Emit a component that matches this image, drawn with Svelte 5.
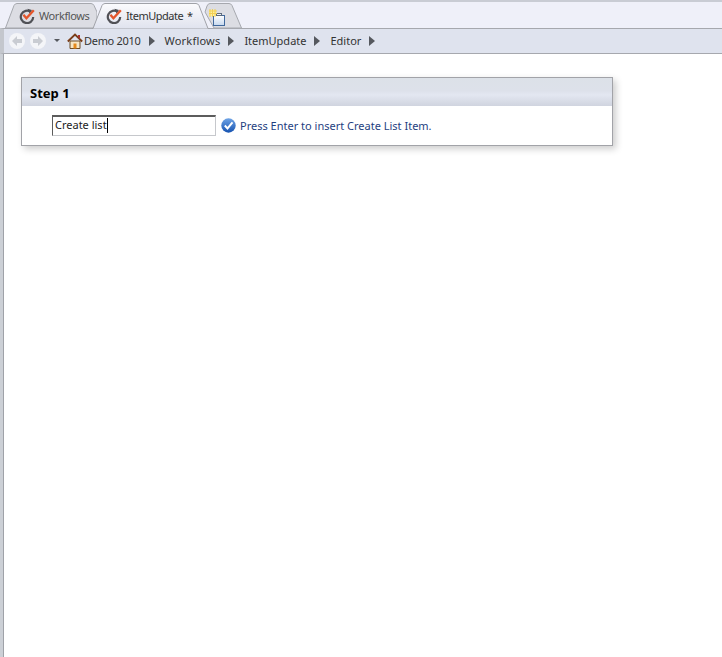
<script>
  const crumbs = ["Workflows", "ItemUpdate", "Editor"];
</script>

{#snippet checkIcon()}
  <svg class="tab-icon" width="16" height="16" viewBox="0 0 16 16">
    <path d="M11.800 4A6.200 6.200 0 1 0 14.200 9" fill="none" stroke="#505156" stroke-width="2.200" />
    <path d="M8.500 0.800l4.500 1.200-2.500 3.500z" fill="#505156" />
    <path d="M4.400 6.800l3 3.400L14.800 2.200" fill="none" stroke="#e4562c" stroke-width="2.400" />
  </svg>
{/snippet}

{#snippet crumbArrow()}
  <svg class="arrow" width="6" height="10" viewBox="0 0 6 10"><path d="M0 0l6 5-6 5z" fill="#55585e" /></svg>
{/snippet}

<div class="page">
  <div class="tabstrip">
    <div class="tab first">
      <svg class="tab-shape" width="92" height="25" viewBox="0 0 92 25">
        <path d="M0.500 25L9 2.500Q10 0.500 12 0.500H86Q88 0.500 89 2.500L92 9V25z" fill="#dcdde3" stroke="#a6a8ae" />
      </svg>
      {@render checkIcon()}
      <span class="muted">Workflows</span>
    </div>
    <div class="tab active">
      <svg class="tab-shape" width="118" height="26" viewBox="0 0 118 26">
        <defs>
          <linearGradient id="activeTab" x1="0" y1="0" x2="0" y2="1">
            <stop offset="0" stop-color="#fbfbfd" />
            <stop offset="1" stop-color="#e0e3ee" />
          </linearGradient>
        </defs>
        <path d="M0 25.500H1L10 2.500Q11 0.500 13 0.500H104Q106 0.500 107 2.500L116 25.500H118" fill="url(#activeTab)" stroke="#a0a2a8" />
      </svg>
      {@render checkIcon()}
      <span class="tab-label">ItemUpdate<span class="dirty">*</span></span>
    </div>
    <div class="tab add">
      <svg class="tab-shape" width="38" height="25" viewBox="0 0 38 25">
        <path d="M1 9L3 3Q4 0.500 6 0.500H25Q27 0.500 28 2.500L37.500 25H10z" fill="#dcdde3" stroke="#a6a8ae" />
      </svg>
      <svg class="add-icon" width="17" height="17" viewBox="0 0 17 17">
        <defs>
          <linearGradient id="docFill" x1="0" y1="0" x2="0" y2="1">
            <stop offset="0" stop-color="#ffffff" />
            <stop offset="1" stop-color="#c6d8ee" />
          </linearGradient>
        </defs>
        <rect x="4.500" y="6.500" width="11" height="10" fill="url(#docFill)" stroke="#41699c" />
        <rect x="7.500" y="4.500" width="5" height="2" fill="#eef2f8" stroke="#5d6b7c" />
        <path d="M0 1h7v6H0z" fill="#fdf0a0" />
        <path d="M1 0v8M3.500 0v8M6 0v8M0 2h8M0 4.500h8" stroke="#f2cf55" stroke-width="1" />
      </svg>
    </div>
  </div>

  <nav class="navbar">
    <span class="nav-btn">
      <svg width="10" height="10" viewBox="0 0 10 10"><path d="M0 5l5-5v3h5v4H5v3z" fill="#c9ccd2" /></svg>
    </span>
    <span class="nav-btn">
      <svg width="10" height="10" viewBox="0 0 10 10"><path d="M10 5L5 0v3H0v4h5v3z" fill="#c9ccd2" /></svg>
    </span>
    <svg class="dropdown" width="6" height="3" viewBox="0 0 6 3"><path d="M0 0h6L3 3z" fill="#55585e" /></svg>
    <svg class="home" width="16" height="16" viewBox="0 0 16 16">
      <path d="M3 8v7.500h10V8z" fill="#f6e6c4" stroke="#6d4c26" />
      <path d="M6.500 15.500v-5h3v5z" fill="#e58a1c" />
      <path d="M0.800 8.500L8 1.500 15.200 8.500" fill="none" stroke="#7a3d18" stroke-width="1.800" />
      <path d="M11 2h2v4l-2-2z" fill="#a33" />
    </svg>
    <span class="crumb home-label">Demo 2010</span>
    {@render crumbArrow()}
    {#each crumbs as crumb, i}
      <span class="crumb" class:wide={i === 0}>{crumb}</span>
      {@render crumbArrow()}
    {/each}
  </nav>

  <main class="content">
    <section class="panel">
      <header class="panel-head">Step 1</header>
      <div class="panel-body">
        <div class="input">Create list<span class="caret"></span></div>
        <svg class="ok" width="15" height="15" viewBox="0 0 15 15">
          <defs>
            <linearGradient id="okBall" x1="0" y1="0" x2="0" y2="1">
              <stop offset="0" stop-color="#6fa4e6" />
              <stop offset="1" stop-color="#1552b0" />
            </linearGradient>
          </defs>
          <circle cx="7.500" cy="7.500" r="7.200" fill="url(#okBall)" />
          <path d="M3.800 7.500l2.700 2.900 5-6" fill="none" stroke="#fff" stroke-width="2" />
        </svg>
        <span class="hint">Press Enter to insert Create List Item.</span>
      </div>
    </section>
  </main>
</div>

<style>
  :global(body) {
    margin: 0;
    background: #fff;
  }

  .page {
    width: 722px;
    height: 657px;
    display: flex;
    flex-direction: column;
    overflow: hidden;
    font-family: "Noto Sans", "Open Sans", sans-serif;
    font-size: 11px;
    color: #333;
  }

  .tabstrip {
    height: 26px;
    flex: none;
    display: flex;
    align-items: flex-end;
    padding-left: 5px;
    border-top: 2px solid #c9ccd4;
    background: #eff0f9;
  }

  .tab {
    position: relative;
    height: 25px;
    display: flex;
    align-items: center;
    box-sizing: border-box;
  }

  .tab-shape {
    position: absolute;
    left: 0;
    top: 0;
  }

  .tab > :not(.tab-shape) {
    position: relative;
  }

  .tab.first {
    width: 87px;
    padding-left: 14px;
    gap: 4px;
  }

  .tab.active {
    width: 112px;
    height: 26px;
    padding: 0 0 1px 14px;
    gap: 4px;
    z-index: 2;
    margin-bottom: -1px;
  }

  .tab.add {
    width: 38px;
    padding: 4px 0 0 5px;
    z-index: 1;
  }

  .muted {
    color: #555;
    letter-spacing: -0.4px;
  }

  .tab-label {
    letter-spacing: -0.5px;
  }

  .dirty {
    margin-left: 4px;
  }

  .navbar {
    height: 26px;
    flex: none;
    display: flex;
    align-items: center;
    box-sizing: border-box;
    padding: 0 0 1px 5px;
    background: #dfe3ee;
    border-top: 1px solid #a6a8ae;
    border-bottom: 1px solid #a6a8ae;
    border-left: 4px solid #c4c7cd;
  }

  .nav-btn {
    width: 16px;
    height: 16px;
    margin-right: 5px;
    border-radius: 50%;
    background: #f4f5f8;
    display: flex;
    align-items: center;
    justify-content: center;
  }

  .dropdown {
    margin: 0 7px 0 3px;
  }

  .home {
    margin-right: 1px;
  }

  .crumb {
    color: #333;
  }

  .crumb.home-label {
    letter-spacing: -0.3px;
  }

  .crumb.wide {
    letter-spacing: 0.2px;
  }

  .arrow {
    margin: 0 10px 0 8px;
  }

  .content {
    flex: 1;
    padding: 23px 0 0 18px;
    border-left: 3px solid #ccd0d6;
    box-shadow: inset 1px 0 0 #9fa2a8;
  }

  .panel {
    width: 590px;
    border: 1px solid #a2a3a8;
    background: #fff;
    box-shadow: 3px 3px 7px rgba(0, 0, 0, 0.2);
  }

  .panel-head {
    height: 28px;
    box-sizing: border-box;
    padding: 6px 0 0 8px;
    font-size: 13px;
    font-weight: 700;
    color: #000;
    background: linear-gradient(#dce1e8, #dde1ea 45%, #e3e7f1 60%, #d0d4df);
  }

  .panel-body {
    height: 39px;
    display: flex;
    align-items: center;
    padding-left: 30px;
    box-sizing: border-box;
  }

  .input {
    width: 164px;
    height: 21px;
    box-sizing: border-box;
    padding-left: 2px;
    line-height: 15px;
    color: #222;
    border: 1px solid #c6c8cc;
    border-top: 2px solid #5c5c5c;
    border-left-color: #5c5c5c;
    display: flex;
  }

  .caret {
    width: 1px;
    height: 15px;
    margin: 1px 0 0 0;
    background: #000;
  }

  .ok {
    margin: 0 4px 0 5px;
  }

  .hint {
    color: #1f3f7f;
  }
</style>
